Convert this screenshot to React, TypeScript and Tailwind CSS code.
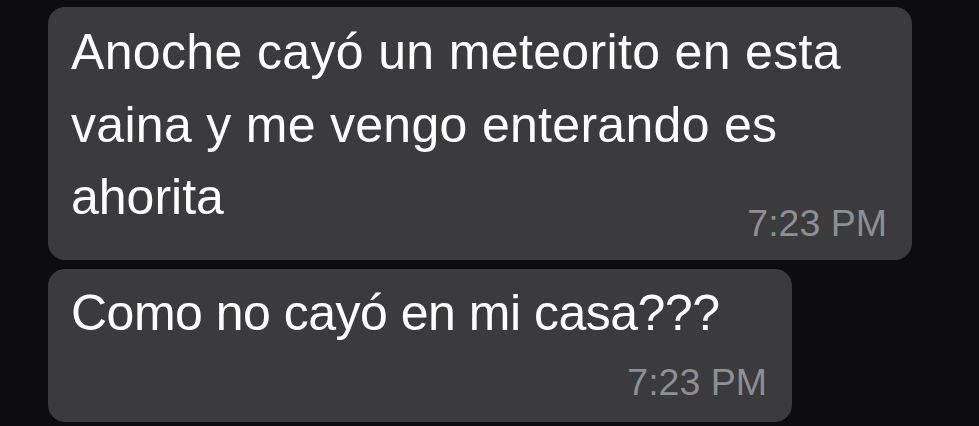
export default function App() {
  return (
    <div
      className="w-[979px] h-[426px] bg-[#0d0d0f] overflow-hidden pl-[48px] pt-[7px] flex flex-col gap-[9px]"
      style={{ fontFamily: '"Liberation Sans", Arial, sans-serif' }}
    >
      <div className="w-[864px] h-[253px] bg-[#3b3b3d] rounded-[17px] pl-[23px] pr-[25px] pt-[9px] flex flex-col">
        <p className="text-[50px] leading-[72.5px] text-white">
          <span className="tracking-[0.35px]">Anoche cayó un meteorito en esta</span>
          <br />
          <span className="tracking-[0.3px]">vaina y me vengo enterando es</span>
          <br />
          ahorita
        </p>
        <div className="flex justify-end mt-[-33px]">
          <span className="text-[37.5px] leading-[44px] text-[#8e8e93]">7:23 PM</span>
        </div>
      </div>
      <div className="w-[744px] h-[153px] bg-[#3b3b3d] rounded-[17px] pl-[23px] pr-[25px] pt-[8px] flex flex-col">
        <p className="text-[50px] leading-[72.5px] text-white tracking-[-0.5px]">Como no cayó en mi casa???</p>
        <div className="flex justify-end mt-[10px]">
          <span className="text-[37.5px] leading-[44px] text-[#8e8e93]">7:23 PM</span>
        </div>
      </div>
    </div>
  );
}
